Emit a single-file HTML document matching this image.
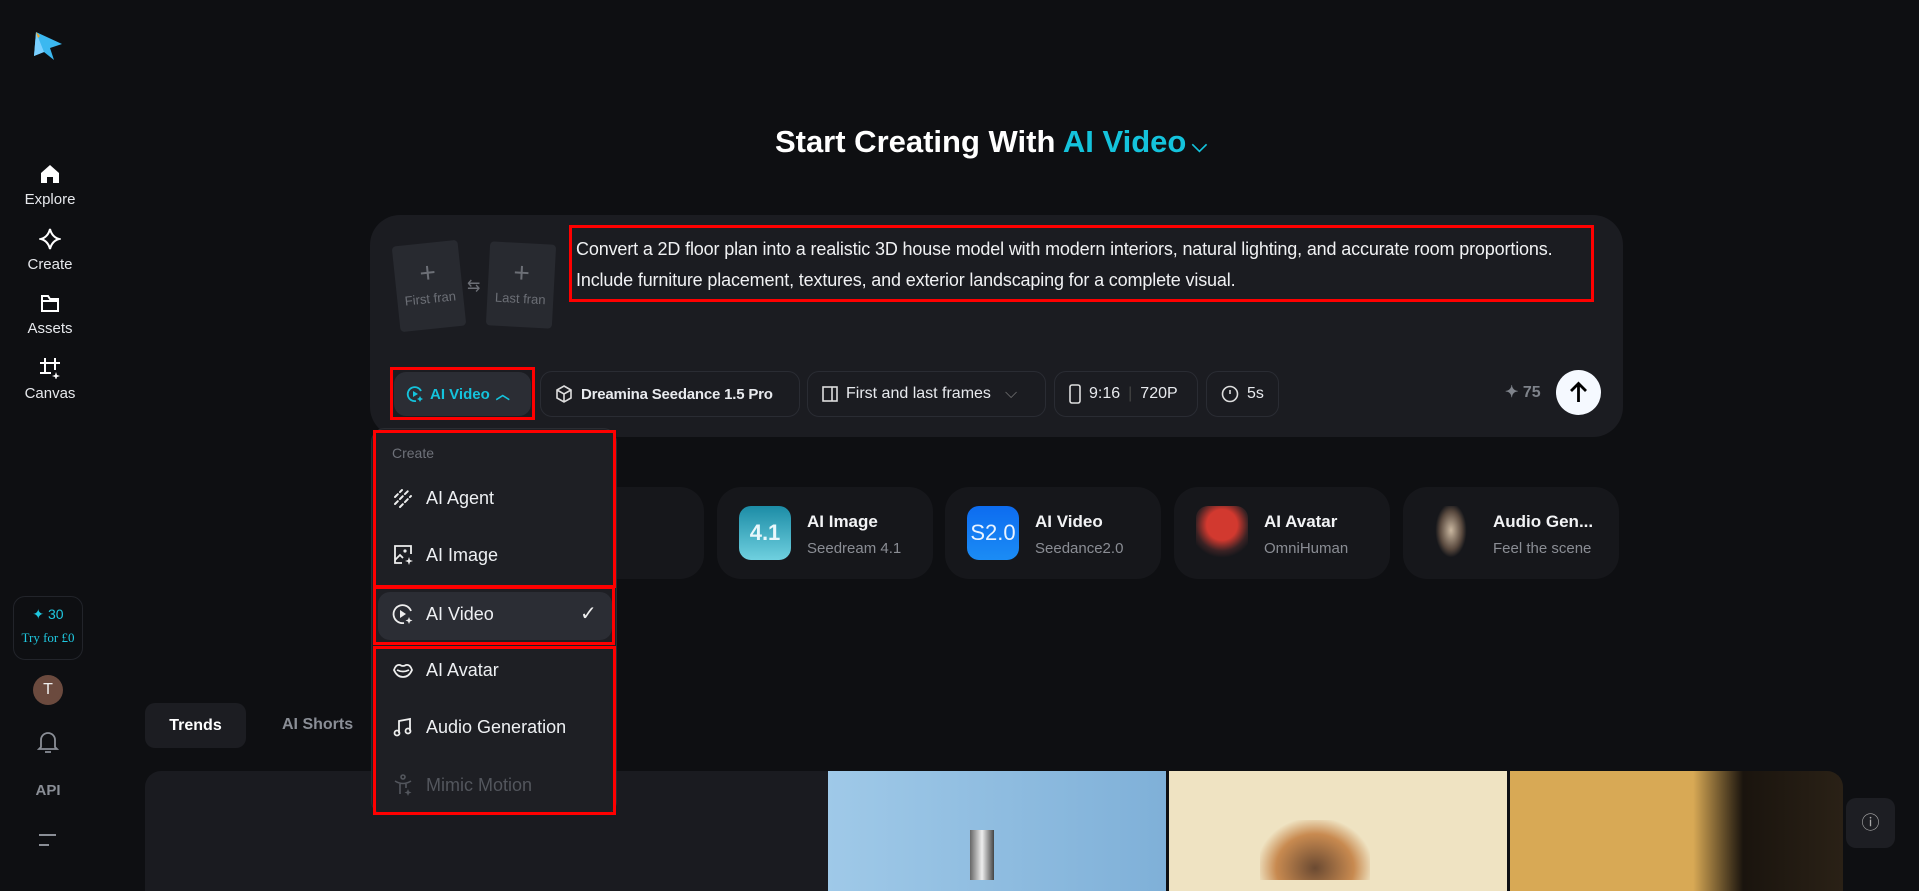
<!DOCTYPE html>
<html><head><meta charset="utf-8"><style>
*{box-sizing:border-box;margin:0;padding:0}
body{width:1919px;height:871px;background:#0e0f12;overflow:hidden;position:relative;font-family:"Liberation Sans",sans-serif;color:#fff}
.a{position:absolute}
.nav{position:absolute;left:0;width:100px;text-align:center;font-size:15px;color:#e6e8ec}
.pill{position:absolute;top:371px;height:46px;border:1px solid #2a2c33;border-radius:12px;display:flex;align-items:center;padding:0 14px;font-size:15px;font-weight:bold;color:#e8eaee;gap:8px;white-space:nowrap}
.card{position:absolute;top:487px;width:216px;height:92px;background:#16171b;border-radius:24px}
.card .ic{position:absolute;left:22px;top:19px;width:52px;height:54px;border-radius:12px}
.card .t{position:absolute;left:90px;top:25px;font-size:17px;font-weight:bold;color:#f2f3f5}
.card .s{position:absolute;left:90px;top:53px;font-size:15px;color:#8a8d94}
.mi{position:absolute;left:392px;display:flex;align-items:center;gap:12px;font-size:18px;color:#eef0f3;white-space:nowrap}
.red{position:absolute;border:3px solid #f00}
</style></head><body>

<svg class="a" style="left:32px;top:30px" width="34" height="32" viewBox="0 0 34 32"><path d="M4 2 L30 14 L18 18 L22 30 L12 22 L2 26 Z" fill="#3bb8f0"/><path d="M4 2 L12 22 L2 26Z" fill="#7ad0ff"/><path d="M4 2 L8 6 L6 8Z" fill="#f5a623"/></svg>
<svg class="a" style="left:39px;top:163px" width="22" height="22" viewBox="0 0 22 22"><path d="M2 10 L11 2 L20 10 V20 H14 V14 H8 V20 H2Z" fill="#fff"/></svg>
<div class="nav" style="top:191px">Explore</div>
<svg class="a" style="left:39px;top:227px" width="22" height="24" viewBox="0 0 22 24"><path d="M11 2 Q13 10 20 12 Q13 14 11 22 Q9 14 2 12 Q9 10 11 2Z" fill="none" stroke="#fff" stroke-width="2"/></svg>
<div class="nav" style="top:256px">Create</div>
<svg class="a" style="left:40px;top:293px" width="20" height="20" viewBox="0 0 20 20"><path d="M2 3 H8 L10 6 H18 V18 H2Z M2 8 H18" fill="none" stroke="#fff" stroke-width="2"/></svg>
<div class="nav" style="top:320px">Assets</div>
<svg class="a" style="left:39px;top:357px" width="22" height="22" viewBox="0 0 22 22"><path d="M6 1 V17 M16 1 V13 M1 6 H21 M1 16 H12" stroke="#fff" stroke-width="2"/><path d="M17 15 l1 3 3 1 -3 1 -1 3 -1-3 -3-1 3-1z" fill="#fff"/></svg>
<div class="nav" style="top:385px">Canvas</div>

<div class="a" style="left:13px;top:596px;width:70px;height:64px;border:1px solid #22242a;border-radius:12px;text-align:center;color:#1fc8e0">
<div style="font-size:14px;margin-top:9px">✦ 30</div>
<div style="font-family:'Liberation Serif',serif;font-size:13px;margin-top:7px">Try for £0</div></div>
<div class="a" style="left:33px;top:675px;width:30px;height:30px;border-radius:50%;background:#6b4a3e;text-align:center;line-height:30px;font-size:16px;color:#eee">T</div>
<svg class="a" style="left:37px;top:730px" width="22" height="24" viewBox="0 0 22 24"><path d="M4 17 V10 A7 7 0 0 1 18 10 V17 L20 19 H2Z M8 22 H14" fill="none" stroke="#8a8e96" stroke-width="1.8"/></svg>
<div class="a" style="left:0;width:96px;top:782px;text-align:center;font-weight:bold;font-size:15px;color:#8a8e96">API</div>
<div class="a" style="left:39px;top:834px;width:17px;height:2px;background:#8a8e96"></div>
<div class="a" style="left:39px;top:844px;width:10px;height:2px;background:#8a8e96"></div>

<div class="a" style="left:0;width:1982px;top:124px;text-align:center;font-size:31px;font-weight:bold">Start Creating With <span style="color:#14c3dc">AI Video</span><span style="color:#14c3dc;font-size:20px"> ⌵</span></div>

<div class="a" style="left:370px;top:215px;width:1253px;height:222px;background:#1b1c21;border-radius:30px"></div>
<div class="a" style="left:396px;top:243px;width:66px;height:86px;background:#282a30;border-radius:4px;transform:rotate(-6deg);text-align:center;color:#6c6f76"><div style="font-size:28px;margin-top:14px">+</div><div style="font-size:13px;margin-top:2px">First fran</div></div>
<div class="a" style="left:467px;top:276px;color:#6c6f76;font-size:16px">⇆</div>
<div class="a" style="left:488px;top:243px;width:66px;height:84px;background:#282a30;border-radius:4px;transform:rotate(3deg);text-align:center;color:#6c6f76"><div style="font-size:28px;margin-top:14px">+</div><div style="font-size:13px;margin-top:2px">Last fran</div></div>
<div class="a" style="left:576px;top:234px;width:1030px;font-size:18px;letter-spacing:-0.15px;line-height:31px;color:#f0f1f3;white-space:nowrap">Convert a 2D floor plan into a realistic 3D house model with modern interiors, natural lighting, and accurate room proportions.<br>Include furniture placement, textures, and exterior landscaping for a complete visual.</div>
<div class="red" style="left:569px;top:225px;width:1025px;height:77px"></div>

<div class="pill" style="left:394px;width:137px;top:372px;height:44px;background:#2b2d34;border:none;color:#14c3dc;gap:6px;padding:0 12px">
<svg width="18" height="18" viewBox="0 0 18 18"><path d="M15 6 A7 7 0 1 0 10 16" fill="none" stroke="#14c3dc" stroke-width="1.8"/><path d="M7 6 L12 9 L7 12Z" fill="#14c3dc"/><path d="M14 11 l1 2 2 1-2 1-1 2-1-2-2-1 2-1z" fill="#14c3dc"/></svg>AI Video <span style="font-size:14px">︿</span></div>
<div class="red" style="left:390px;top:367px;width:145px;height:53px"></div>
<div class="pill" style="left:540px;width:260px;letter-spacing:-0.2px"><svg width="18" height="18" viewBox="0 0 18 18"><path d="M9 1 L16 5 V13 L9 17 L2 13 V5Z M2 5 L9 9 L16 5 M9 9 V17" fill="none" stroke="#ddd" stroke-width="1.6"/></svg>Dreamina Seedance 1.5 Pro</div>
<div class="pill" style="left:807px;width:239px;font-weight:normal;font-size:16px"><svg width="16" height="18" viewBox="0 0 16 18"><rect x="1" y="2" width="14" height="14" fill="none" stroke="#ddd" stroke-width="1.6"/><path d="M10 2 V16" stroke="#ddd" stroke-width="1.6"/></svg>First and last frames <span style="color:#777;margin-left:6px">⌵</span></div>
<div class="pill" style="left:1054px;width:144px;font-weight:normal;font-size:16px"><svg width="12" height="20" viewBox="0 0 12 20"><rect x="1" y="1" width="10" height="18" rx="2" fill="none" stroke="#ddd" stroke-width="1.6"/></svg>9:16 <span style="color:#444">|</span> 720P</div>
<div class="pill" style="left:1206px;width:73px;font-weight:normal;font-size:16px"><svg width="18" height="18" viewBox="0 0 18 18"><circle cx="9" cy="9" r="7.5" fill="none" stroke="#ddd" stroke-width="1.6"/><path d="M9 5 V9" stroke="#ddd" stroke-width="1.6"/></svg>5s</div>
<div class="a" style="left:1505px;top:382px;font-size:16px;color:#7f838b;font-weight:bold">✦ 75</div>
<div class="a" style="left:1556px;top:370px;width:45px;height:45px;border-radius:50%;background:#f5f9ff"><svg width="45" height="45" viewBox="0 0 45 45"><path d="M22.5 32 V14 M15 21 L22.5 13.5 L30 21" fill="none" stroke="#000" stroke-width="2.8"/></svg></div>

<div class="card" style="left:488px"></div>
<div class="card" style="left:717px"><div class="ic" style="background:linear-gradient(#1c8ca6,#6fd0df);color:#e9f7fb;font-size:22px;font-weight:bold;line-height:54px;text-align:center">4.1</div><div class="t">AI Image</div><div class="s">Seedream 4.1</div></div>
<div class="card" style="left:945px"><div class="ic" style="background:linear-gradient(#0d6cf0,#1b8cf5);color:#eaf3ff;font-size:22px;line-height:54px;text-align:center">S2.0</div><div class="t">AI Video</div><div class="s">Seedance2.0</div></div>
<div class="card" style="left:1174px"><div class="ic" style="background:radial-gradient(circle at 50% 35%,#d2392f 0 35%,#3a2224 60%,#16171b 75%)"></div><div class="t">AI Avatar</div><div class="s">OmniHuman</div></div>
<div class="card" style="left:1403px"><div class="ic" style="background:radial-gradient(ellipse 30% 50% at 50% 45%,#c9b7a0,#5a4a3f 70%,#16171b 100%)"></div><div class="t">Audio Gen...</div><div class="s">Feel the scene</div></div>

<div class="a" style="left:145px;top:703px;width:101px;height:45px;background:#1c1d22;border-radius:10px;text-align:center;line-height:45px;font-weight:bold;font-size:16px">Trends</div>
<div class="a" style="left:282px;top:716px;font-weight:bold;font-size:16px;color:#8a8e96">AI Shorts</div>

<div class="a" style="left:145px;top:771px;width:683px;height:120px;background:#1a1b20;border-radius:16px 0 0 0"></div>
<div class="a" style="left:828px;top:771px;width:338px;height:120px;background:linear-gradient(90deg,#9fc9e8,#7fb0d8)"></div>
<div class="a" style="left:970px;top:830px;width:24px;height:50px;background:linear-gradient(90deg,#666,#eee,#444)"></div>
<div class="a" style="left:1169px;top:771px;width:338px;height:120px;background:#efe3c2"></div>
<div class="a" style="left:1260px;top:820px;width:110px;height:60px;background:radial-gradient(ellipse at 50% 80%,#6b4a32,#c88a50 50%,#efe3c2 75%)"></div>
<div class="a" style="left:1510px;top:771px;width:333px;height:120px;background:linear-gradient(90deg,#d8a955 0 55%,#1a140e 70%,#2a2116);border-radius:0 16px 0 0"></div>
<div class="a" style="left:1846px;top:798px;width:49px;height:50px;background:#1d1e23;border-radius:10px;text-align:center;line-height:50px;color:#aaa;font-size:18px">ⓘ</div>

<div class="a" style="left:371px;top:428px;width:246px;height:387px;background:#1e1f24;border:1px solid #2a2c32;border-radius:14px"></div>
<div class="a" style="left:392px;top:445px;font-size:14px;color:#6e7179">Create</div>
<div class="mi" style="top:487px"><svg width="22" height="22" viewBox="0 0 22 22"><path d="M3 10 L10 3 M3 17 L17 3 M8 20 L19 9" stroke="#eee" stroke-width="2" stroke-linecap="round" stroke-dasharray="4 3"/></svg>AI Agent</div>
<div class="mi" style="top:544px"><svg width="22" height="22" viewBox="0 0 22 22"><path d="M12 2 H3 V19 H10 M19 10 V2 H12" fill="none" stroke="#eee" stroke-width="1.8"/><circle cx="13" cy="7" r="1.6" fill="#eee"/><path d="M3 16 L8 11 L11 14" fill="none" stroke="#eee" stroke-width="1.8"/><path d="M17 13 l1 3 3 1-3 1-1 3-1-3-3-1 3-1z" fill="#eee"/></svg>AI Image</div>
<div class="a" style="left:378px;top:592px;width:234px;height:48px;background:#2b2d34;border-radius:12px"></div>
<div class="mi" style="top:603px"><svg width="22" height="22" viewBox="0 0 22 22"><path d="M19 8 A9 9 0 1 0 12 20" fill="none" stroke="#eee" stroke-width="1.8"/><path d="M8 7 L14 11 L8 15Z" fill="#eee"/><path d="M17 14 l1 2.5 2.5 1-2.5 1-1 2.5-1-2.5-2.5-1 2.5-1z" fill="#eee"/></svg>AI Video</div>
<div class="a" style="left:580px;top:601px;font-size:20px;color:#eee">✓</div>
<div class="mi" style="top:659px"><svg width="22" height="22" viewBox="0 0 22 22"><path d="M2 11 Q4 5 8 6 Q11 8 14 6 Q18 5 20 11 Q17 18 11 18 Q5 18 2 11Z M5 11 Q11 14 17 11" fill="none" stroke="#eee" stroke-width="1.8"/></svg>AI Avatar</div>
<div class="mi" style="top:716px"><svg width="22" height="22" viewBox="0 0 22 22"><path d="M7 17 V5 L18 3 V15" fill="none" stroke="#eee" stroke-width="1.8"/><circle cx="5" cy="17" r="2.5" fill="none" stroke="#eee" stroke-width="1.8"/><circle cx="16" cy="15" r="2.5" fill="none" stroke="#eee" stroke-width="1.8"/></svg>Audio Generation</div>
<div class="mi" style="top:774px;color:#53565d"><svg width="22" height="22" viewBox="0 0 22 22"><circle cx="11" cy="3" r="2" fill="none" stroke="#53565d" stroke-width="1.6"/><path d="M3 7 Q11 12 19 7 M8 10 V20 M14 10 V14" fill="none" stroke="#53565d" stroke-width="1.6"/><path d="M16 15 l1 2.5 2.5 1-2.5 1-1 2.5-1-2.5-2.5-1 2.5-1z" fill="#53565d"/></svg>Mimic Motion</div>
<div class="red" style="left:373px;top:430px;width:243px;height:158px"></div>
<div class="red" style="left:373px;top:586px;width:242px;height:59px"></div>
<div class="red" style="left:373px;top:646px;width:243px;height:169px"></div>
</body></html>
